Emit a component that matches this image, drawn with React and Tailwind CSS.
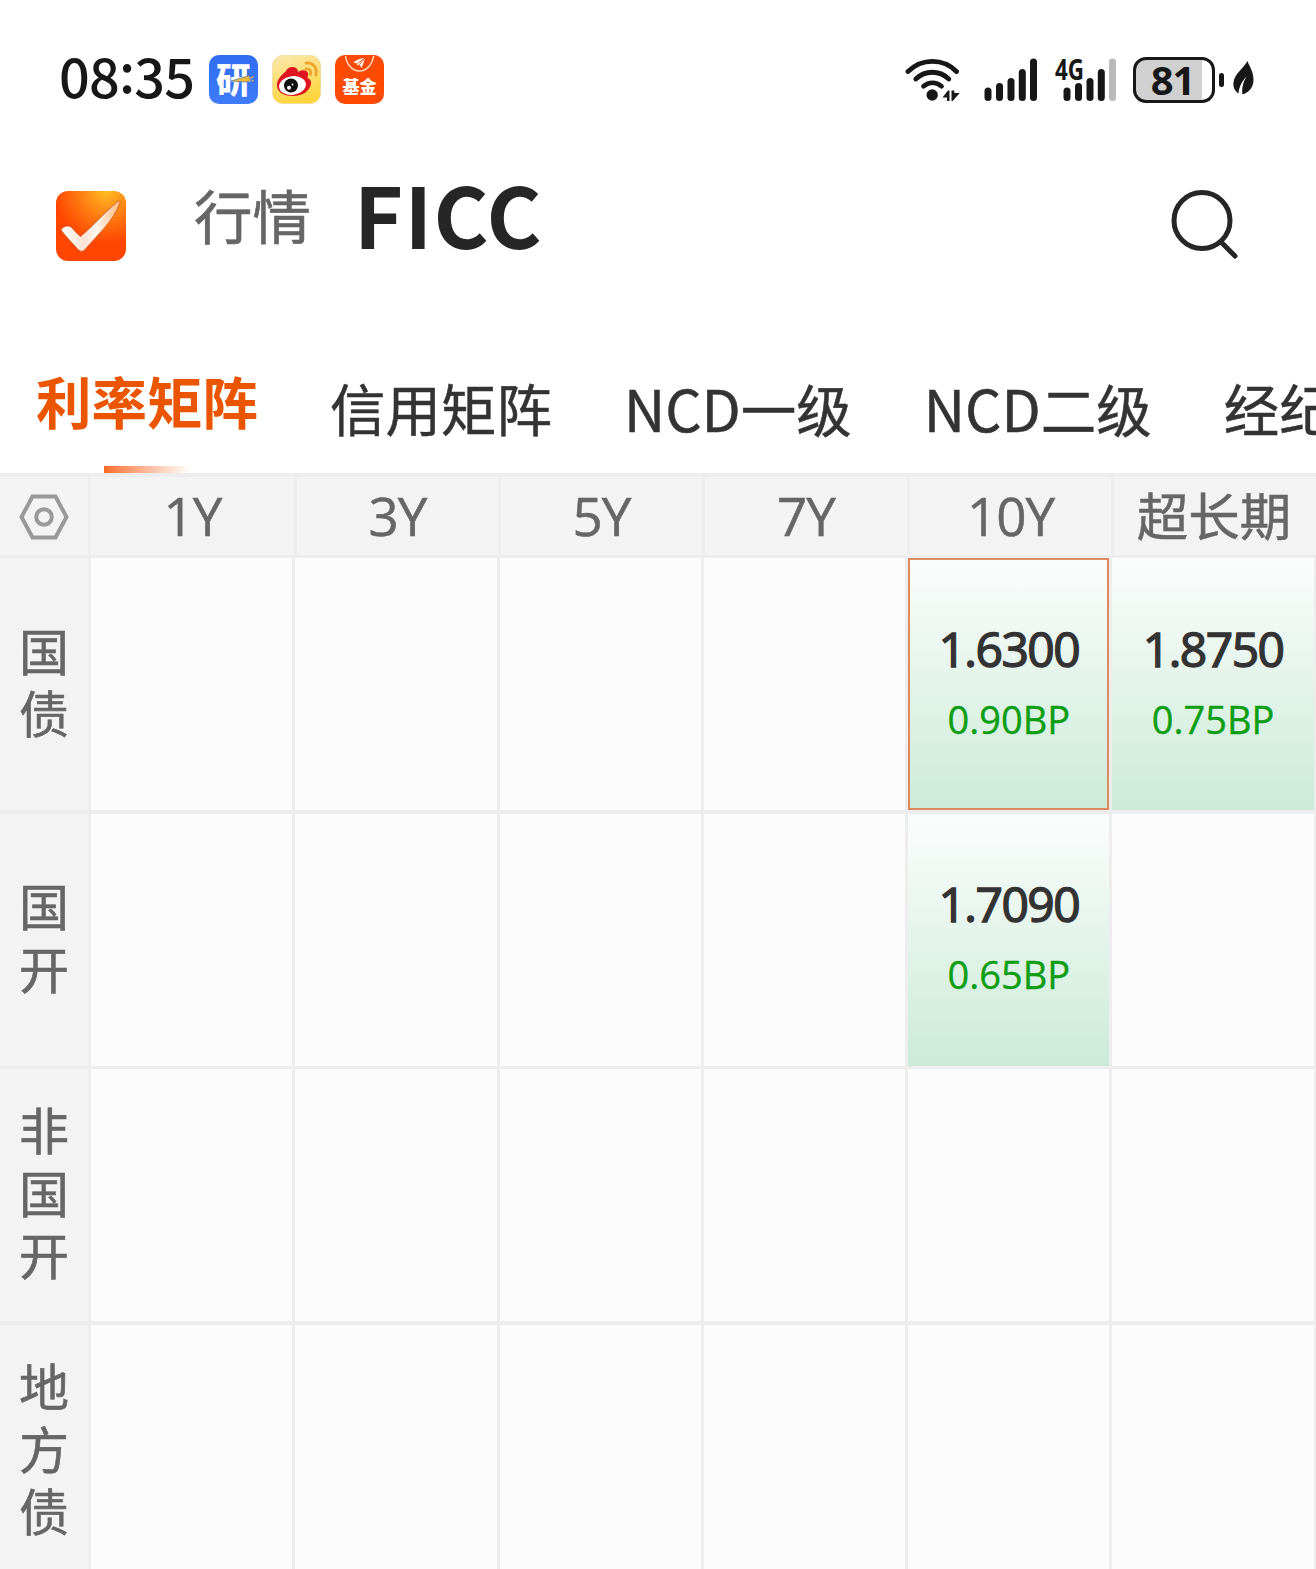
const TABS = ['信用矩阵', 'NCD一级', 'NCD二级', '经纪']

const TERMS = ['1Y', '3Y', '5Y', '7Y', '10Y', '超长期']

const ROWS = [
  { label: '国债', cells: { '10Y': { rate: '1.6300', bp: '0.90BP', active: true }, 超长期: { rate: '1.8750', bp: '0.75BP' } } },
  { label: '国开', cells: { '10Y': { rate: '1.7090', bp: '0.65BP' } } },
  { label: '非国开', cells: {} },
  { label: '地方债', cells: {} },
]

function ResearchIcon() {
  return (
    <div className="relative flex h-[49px] w-[49px] justify-center rounded-[10px] bg-gradient-to-b from-[#2f6cf0] to-[#3f7cfb]">
      <span className="pt-[5px] text-[35px] leading-[36px] font-black text-white">研</span>
      <svg className="absolute inset-0" width="49" height="49" viewBox="0 0 49 49">
        <path d="M22 26L40 20.500l1.500 5-4 1.500z" fill="#e9b93b" stroke="#5a6f8c" strokeWidth="0.7" />
        <path d="M42 23l2.500-1.500M42.500 25.500h2" stroke="#e9b93b" strokeWidth="1.300" />
      </svg>
    </div>
  )
}

function WeiboIcon() {
  return (
    <svg width="49" height="49" viewBox="0 0 49 49">
      <defs>
        <linearGradient id="weibo" x1="0" y1="0" x2="0.3" y2="1">
          <stop offset="0" stopColor="#fbe8ae" />
          <stop offset="1" stopColor="#fcd640" />
        </linearGradient>
      </defs>
      <rect x="0.5" y="0.5" width="48" height="48" rx="10" fill="url(#weibo)" stroke="#eed28a" strokeWidth="0.6" />
      <path d="M5 30c0-6 5-10 9-14 1-3 5-5 9-3.500 2 .8 3 2.500 3 4.500 4-3 9-2 10 1 .5 2-.5 3.500-.5 5 3 1 4 3.500 3.500 6C37.500 36 31 41 21 41S5 37 5 30z" fill="#de1520" />
      <ellipse cx="20.500" cy="30.500" rx="13.500" ry="9.300" fill="#fff" transform="rotate(-8 20.500 30.500)" />
      <circle cx="19" cy="30.500" r="7" fill="#111" />
      <circle cx="17" cy="32.800" r="2" fill="#fff" />
      <circle cx="20.500" cy="29.500" r="0.9" fill="#fff" />
      <path d="M34 14c3.500-.5 5.500 2 4.500 5.500M34 8c7-1 11.500 5 10 12" fill="none" stroke="#eda52f" strokeWidth="2.800" strokeLinecap="round" />
    </svg>
  )
}

function FundIcon() {
  return (
    <div className="relative flex h-[49px] w-[49px] items-end justify-center rounded-[10px] bg-[#fd4a05]">
      <svg className="absolute inset-0" width="49" height="49" viewBox="0 0 49 49">
        <path d="M10.500 1c1 8.500 7 15 14 15s13-6.500 14-15" fill="none" stroke="#ffd9c6" strokeWidth="1.500" />
        <path d="M18.500 7.500C21 5 25 3.500 30 3c-1 3.500-2 6.500-3.500 10l-2-3.500-2 1-.3-2z" fill="#fff" />
        <path d="M24.500 9.500L30 3l-7.500 5.500" fill="none" stroke="#fd4a05" strokeWidth="0.9" />
      </svg>
      <span className="pb-[7px] text-[17px] leading-[22px] font-black text-white">基金</span>
    </div>
  )
}

function StatusIcons() {
  return (
    <div className="flex items-center pt-px text-[#171717]">
      <svg width="56" height="46" viewBox="0 0 56 46" className="mr-[23px]">
        <g fill="none" stroke="currentColor" strokeWidth="4.8" strokeLinecap="round">
          <path d="M3 14.500C17 1 38 1 51.500 14.500" />
          <path d="M10.800 22c9.500-9 23.500-9 33 0" />
          <path d="M18.500 29.300c5.500-4.700 12.500-4.700 18 0" />
        </g>
        <circle cx="27.200" cy="38" r="5.700" fill="currentColor" />
        <path d="M37.500 40.500l5.500-7h1.500v10.500H42v-3.500zM46.500 33.500V44h1.200l6.600-7.500V36h-5v-2.500z" fill="currentColor" />
      </svg>
      <svg width="54" height="46" viewBox="0 0 54 46" className="mr-[17px]">
        <g fill="currentColor">
          <rect x="0.5" y="30.500" width="7" height="13.500" rx="3.500" />
          <rect x="12" y="26" width="7" height="18" rx="3.500" />
          <rect x="23.500" y="21" width="7" height="23" rx="3.500" />
          <rect x="34.800" y="12" width="7" height="32" rx="3.500" />
          <rect x="46" y="1.500" width="7" height="42.500" rx="3.500" />
        </g>
      </svg>
      <div className="relative mr-[17px] h-[46px] w-[61px]">
        <svg width="61" height="46" viewBox="0 0 61 46">
          <g fill="currentColor">
            <rect x="8.500" y="30.500" width="7" height="13.500" rx="3.500" />
            <rect x="20" y="26" width="7" height="18" rx="3.500" />
            <rect x="31.500" y="21" width="7" height="23" rx="3.500" />
            <rect x="42.800" y="12" width="7" height="32" rx="3.500" />
            <rect x="54" y="1.500" width="7" height="42.500" rx="3.500" fill="#bababa" />
          </g>
        </svg>
        <span className="absolute -top-px left-0 origin-left scale-x-[0.8] font-['Open_Sans',sans-serif] text-[28px] leading-[26px] font-bold">4G</span>
      </div>
      <div className="flex h-[46px] w-[82px] items-center justify-center rounded-[13px] border-[3px] border-[#171717] bg-[linear-gradient(90deg,#d0d0d0_87%,#ffffff_87%)]">
        <span className="pr-[3px] font-['Open_Sans',sans-serif] text-[40px] leading-[40px] font-bold tracking-[-1px]">81</span>
      </div>
      <div className="ml-[4px] h-[14px] w-[5px] rounded-full bg-[#171717]" />
      <svg width="23" height="36" viewBox="0 0 23 36" className="mt-[-3px] ml-[8px]">
        <path d="M15.500 1C17 6 21.500 11 21.500 19.500 21.500 27 17.500 32 10.500 34.500 9.500 29 11 22 14.500 16.500 10 21 7 27 6.500 33.500 2.500 31 1 27 1.500 22.500 2.500 13.500 11 9 15.500 1z" fill="currentColor" />
      </svg>
    </div>
  )
}

function StatusBar() {
  return (
    <div className="flex h-[158px] shrink-0 items-center justify-between pr-[61px] pl-[59px]">
      <div className="flex items-center">
        <span className="w-[150px] pb-[9px] text-[54px] leading-[54px] font-medium tracking-[-0.8px] text-[#171717]">
          08<span className="inline-block -translate-y-[5px]">:</span>35
        </span>
        <div className="flex gap-[14px]">
          <ResearchIcon />
          <WeiboIcon />
          <FundIcon />
        </div>
      </div>
      <StatusIcons />
    </div>
  )
}

function AppLogo() {
  return (
    <svg width="70" height="70" viewBox="0 0 70 70">
      <defs>
        <radialGradient id="logo" cx="0.72" cy="0" r="0.75">
          <stop offset="0" stopColor="#ffbd24" />
          <stop offset="0.5" stopColor="#fe7d12" />
          <stop offset="1" stopColor="#ff4500" />
        </radialGradient>
        <linearGradient id="tick" x1="0" y1="0" x2="1" y2="0">
          <stop offset="0" stopColor="#ffffff" />
          <stop offset="0.4" stopColor="#fbe3d3" />
          <stop offset="0.6" stopColor="#fff6ee" />
          <stop offset="1" stopColor="#ffb97a" />
        </linearGradient>
      </defs>
      <rect width="70" height="70" rx="12" fill="url(#logo)" />
      <path d="M5 39c1-3 7-5.500 10-3 3 2.500 5 6 9.500 9.500C38 34 48 22 61.500 10.500c1.500-1.200 3-.3 2.500 1.500C57 31 42 43 29.500 58c-2.500 3-5 3-7.500.5C16 51.500 10 46 5 39z" fill="url(#tick)" stroke="#c8521c" strokeWidth="0.8" />
    </svg>
  )
}

function NavBar() {
  return (
    <div className="flex h-[135px] shrink-0 items-center justify-between pr-[77px] pl-[56px]">
      <div className="flex items-center">
        <AppLogo />
        <span className="ml-[68px] pb-[23px] text-[58.5px] leading-[58px] text-[#666666] [-webkit-text-stroke:0.6px]">行情</span>
        <span className="ml-[43px] pb-[26px] text-[84px] leading-[84px] font-bold tracking-[1.3px] text-[#262626]">FICC</span>
      </div>
      <svg width="70" height="72" viewBox="0 0 70 72" fill="none" stroke="#262626" strokeWidth="5" strokeLinecap="round" className="mb-[2px]">
        <circle cx="33" cy="31.500" r="28" />
        <path d="M52.500 53.500L66 67" />
      </svg>
    </div>
  )
}

function TabBar() {
  return (
    <div className="flex h-[180px] shrink-0 gap-[72px] overflow-hidden pl-[36px] text-[55.5px] leading-[56px] whitespace-nowrap text-[#333333]">
      <div className="flex flex-col items-center justify-between pt-[79px]">
        <span className="font-bold text-[#eb5500]">利率矩阵</span>
        <div className="h-[7px] w-[86px] bg-gradient-to-r from-[#f86a20] to-white" />
      </div>
      {TABS.map((tab) => (
        <span key={tab} className="pt-[86px] [-webkit-text-stroke:0.5px]">
          {tab.startsWith('NCD') ? <span className="text-[57px]">NCD</span> : null}
          {tab.replace('NCD', '')}
        </span>
      ))}
    </div>
  )
}

function MatrixHeader() {
  return (
    <div className="grid h-[85px] shrink-0 grid-cols-[91px_206px_204px_204px_205px_204px_202px] border-t-4 border-b-3 border-[#ededed] bg-[#f3f3f3] text-[#666666]">
      <div className="flex items-center border-r-3 border-[#ededed] pt-[2px] pl-[18px]">
        <svg width="52" height="48" viewBox="0 0 52 48" fill="none" stroke="#999999" strokeWidth="4">
          <path d="M14.500 3.500h23L48.500 24l-11 20.500h-23L3.500 24z" />
          <circle cx="26" cy="24" r="7.800" />
        </svg>
      </div>
      {TERMS.map((term) => (
        <div
          key={term}
          className="flex items-center justify-center border-r-3 border-[#ededed] pb-px font-['Open_Sans','Noto_Sans_CJK_SC',sans-serif] text-[53px] leading-[60px] tracking-[-1px] whitespace-nowrap last:border-r-0 last:pr-[2px] last:text-[51.500px] last:tracking-normal [-webkit-text-stroke:0.5px]"
        >
          {term}
        </div>
      ))}
    </div>
  )
}

function MatrixCell({ quote }) {
  if (!quote) return <div className="bg-[#fcfcfc]" />
  return (
    <div
      className={`flex flex-col items-center justify-center bg-gradient-to-b from-[#fcfdfd] to-[#cbebd8] pb-px font-['Open_Sans',sans-serif] ${
        quote.active ? 'outline-2 -outline-offset-2 outline-[#dd8a60]' : ''
      }`}
    >
      <span className="text-[48px] leading-[71px] tracking-[-1.500px] text-[#333333] [-webkit-text-stroke:1.400px]">{quote.rate}</span>
      <span className="text-[38px] leading-[71px] text-[#0f9d15] [-webkit-text-stroke:0.4px]">{quote.bp}</span>
    </div>
  )
}

function MatrixRow({ row }) {
  return (
    <div className="grid h-[252px] grid-cols-[88px_repeat(6,201.3px)] gap-x-[3px]">
      <div className="flex items-center justify-center bg-[#f3f3f3] pb-[8px]">
        <span className="w-[50px] text-[50px] leading-[62.500px] break-all text-[#666666] [-webkit-text-stroke:0.6px]">{row.label}</span>
      </div>
      {TERMS.map((term) => (
        <MatrixCell key={term} quote={row.cells[term]} />
      ))}
    </div>
  )
}

function App() {
  return (
    <div className="flex h-[1569px] w-[1316px] flex-col overflow-hidden bg-white font-['Noto_Sans_CJK_SC',sans-serif]">
      <StatusBar />
      <NavBar />
      <TabBar />
      <MatrixHeader />
      <div className="flex shrink-0 flex-col gap-[3.600px] bg-[#ededed]">
        {ROWS.map((row) => (
          <MatrixRow key={row.label} row={row} />
        ))}
      </div>
    </div>
  )
}

export default App
